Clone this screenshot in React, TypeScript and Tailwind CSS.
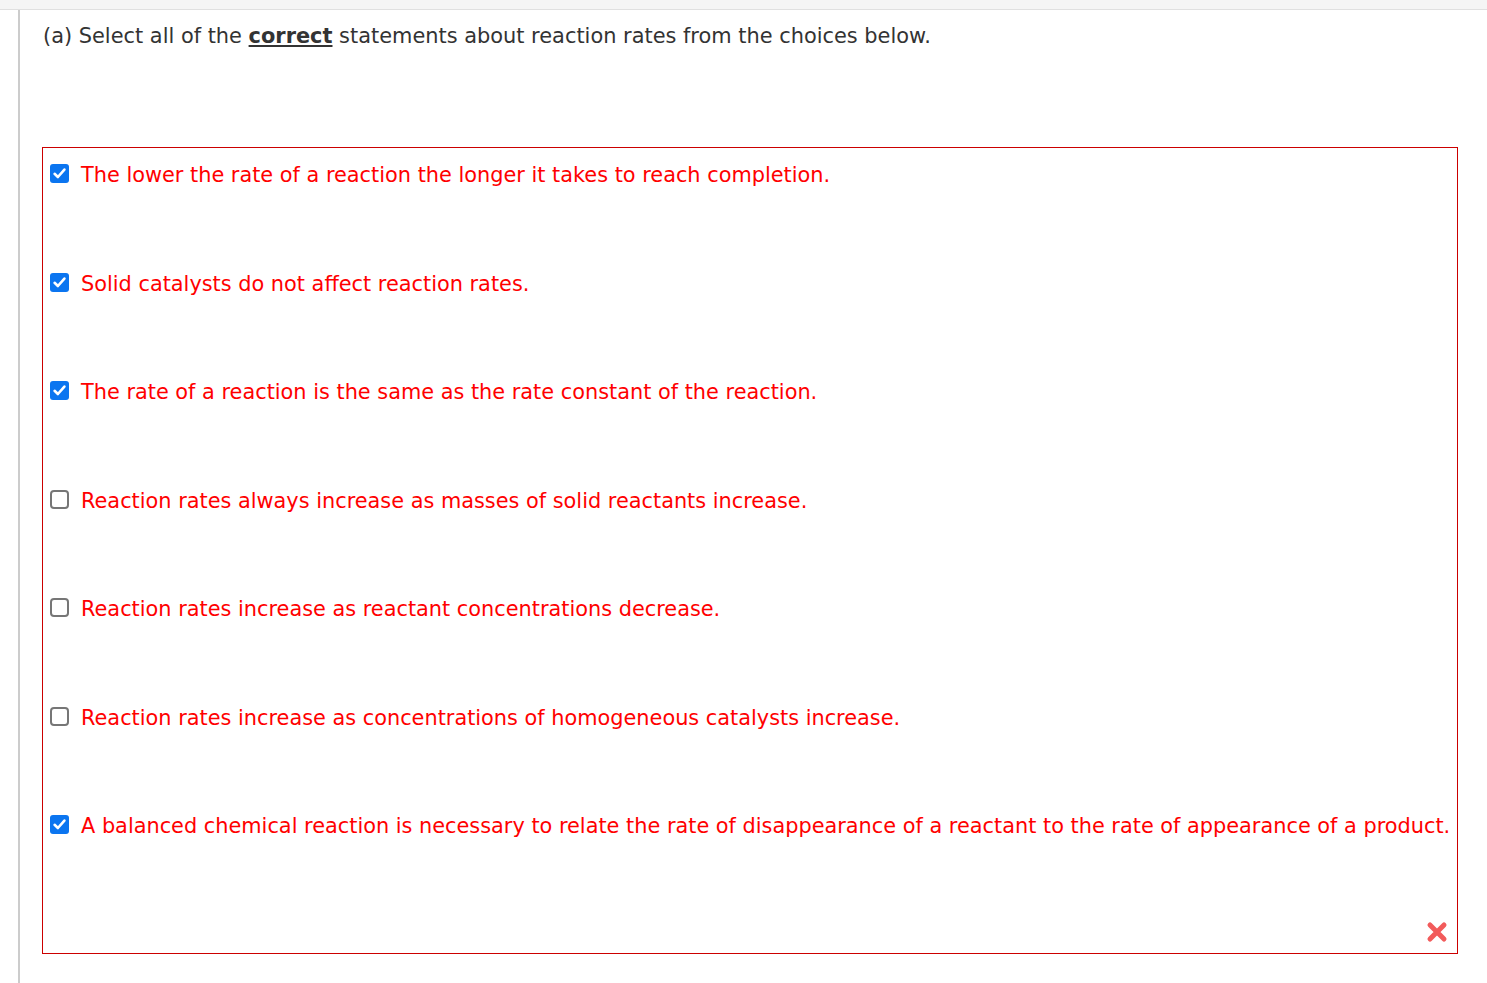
import React from "react";

const items: { text: string; checked: boolean }[] = [
  { text: "The lower the rate of a reaction the longer it takes to reach completion.", checked: true },
  { text: "Solid catalysts do not affect reaction rates.", checked: true },
  { text: "The rate of a reaction is the same as the rate constant of the reaction.", checked: true },
  { text: "Reaction rates always increase as masses of solid reactants increase.", checked: false },
  { text: "Reaction rates increase as reactant concentrations decrease.", checked: false },
  { text: "Reaction rates increase as concentrations of homogeneous catalysts increase.", checked: false },
  {
    text: "A balanced chemical reaction is necessary to relate the rate of disappearance of a reactant to the rate of appearance of a product.",
    checked: true,
  },
];

function Box({ checked }: { checked: boolean }) {
  if (checked) {
    return (
      <span className="flex h-[19px] w-[19px] shrink-0 items-center justify-center rounded-[3px] bg-[#0b75f0]">
        <svg width="15" height="15" viewBox="0 0 15 15">
          <path d="M2.6 7.8 L5.9 11 L12.4 3.6" fill="none" stroke="white" strokeWidth="2.6" strokeLinecap="round" strokeLinejoin="round" />
        </svg>
      </span>
    );
  }
  return <span className="block h-[19px] w-[19px] shrink-0 rounded-[4px] border-2 border-[#767676] bg-white" />;
}

export default function App() {
  return (
    <div className="h-[983px] w-[1487px] overflow-hidden bg-white" style={{ fontFamily: '"DejaVu Sans", Verdana, sans-serif' }}>
      <div className="h-[10px] border-b border-[#e0e0e0] bg-[#f5f5f5]" />
      <div className="flex h-[973px]">
        <div className="ml-[18px] w-[2px] bg-[#cccccc]" />
        <div className="flex-1 pl-[22px] pr-[29px]">
          <div className="pl-[1px] pt-[13px] text-[20.9px] leading-[26px] text-[#333333]">
            (a) Select all of the <span className="font-bold underline">correct</span> statements about reaction rates from the choices below.
          </div>
          <div className="relative mt-[98px] h-[807px] border border-[#cc0000] pl-[7px]">
            <div className="flex flex-col pt-[14px]">
              {items.map((it, i) => (
                <div key={i} className="flex h-[108.5px] items-start gap-[12px]">
                  <div className="pt-[2px]">
                    <Box checked={it.checked} />
                  </div>
                  <span className="whitespace-nowrap pt-[1px] text-[20.85px] leading-[24px] text-[#ff0000]">{it.text}</span>
                </div>
              ))}
            </div>
            <div className="absolute bottom-[10px] right-[9px]">
              <svg width="22" height="22" viewBox="0 0 22 22">
                <path d="M4 4 L18 18 M18 4 L4 18" stroke="#f25b5b" strokeWidth="5" strokeLinecap="round" />
              </svg>
            </div>
          </div>
        </div>
      </div>
    </div>
  );
}
